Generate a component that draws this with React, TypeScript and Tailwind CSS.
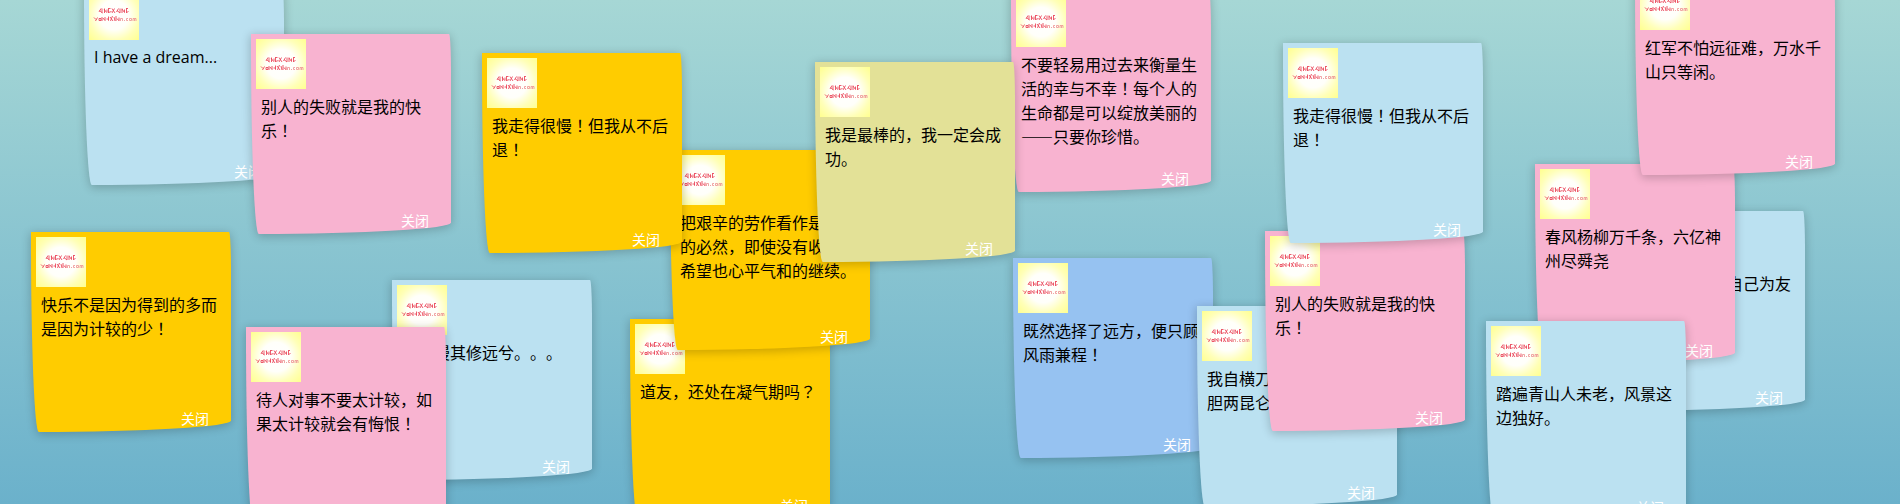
const blue = "bg-[#bbe1f1]";
const pink = "bg-[#f8b3d0]";
const yellow = "bg-[#ffcc00]";
const khaki = "bg-[#e3e197]";
const sky = "bg-[#96c2f1]";

type Note = { text: string; color: string; place: string };

// Later notes lie over earlier ones.
const notes: Note[] = [
  { text: "I have a dream...", color: blue, place: "left-[84px] top-[-15px]" },
  { text: "别人的失败就是我的快乐！", color: pink, place: "left-[251px] top-[34px]" },
  { text: "快乐不是因为得到的多而是因为计较的少！", color: yellow, place: "left-[31px] top-[232px]" },
  { text: "路漫漫其修远兮。。。", color: blue, place: "left-[392px] top-[280px]" },
  { text: "待人对事不要太计较，如果太计较就会有悔恨！", color: pink, place: "left-[246px] top-[327px]" },
  { text: "道友，还处在凝气期吗？", color: yellow, place: "left-[630px] top-[319px]" },
  { text: "把艰辛的劳作看作是生命的必然，即使没有收获的希望也心平气和的继续。", color: yellow, place: "left-[670px] top-[150px]" },
  { text: "我走得很慢！但我从不后退！", color: yellow, place: "left-[482px] top-[53px]" },
  { text: "不要轻易用过去来衡量生活的幸与不幸！每个人的生命都是可以绽放美丽的——只要你珍惜。", color: pink, place: "left-[1011px] top-[-8px]" },
  { text: "我是最棒的，我一定会成功。", color: khaki, place: "left-[815px] top-[62px]" },
  { text: "既然选择了远方，便只顾风雨兼程！", color: sky, place: "left-[1013px] top-[258px]" },
  { text: "我自横刀向天笑，去留肝胆两昆仑", color: blue, place: "left-[1197px] top-[306px]" },
  { text: "别人的失败就是我的快乐！", color: pink, place: "left-[1265px] top-[231px]" },
  { text: "我走得很慢！但我从不后退！", color: blue, place: "left-[1283px] top-[43px]" },
  { text: "以天地为师，以自己为友", color: blue, place: "left-[1605px] top-[211px]" },
  { text: "春风杨柳万千条，六亿神州尽舜尧", color: pink, place: "left-[1535px] top-[164px]" },
  { text: "红军不怕远征难，万水千山只等闲。", color: pink, place: "left-[1635px] top-[-25px]" },
  { text: "踏遍青山人未老，风景这边独好。", color: blue, place: "left-[1486px] top-[321px]" },
];

function Avatar() {
  return (
    <svg viewBox="0 0 50 50" className="block size-[50px]" aria-hidden="true">
      <defs>
        <radialGradient id="glow" cx="50%" cy="50%" r="70%">
          <stop offset="0" stopColor="#ffffff" />
          <stop offset="0.42" stopColor="#fffffa" />
          <stop offset="0.72" stopColor="#ffffb8" />
          <stop offset="1" stopColor="#ffff90" />
        </radialGradient>
      </defs>
      <rect width="50" height="50" fill="url(#glow)" />
      <g fill="none" stroke="#ea4a5c">
        <path
          strokeWidth="0.9"
          d="M10 22l2-3.500M10.500 20.500l3 2.500M13 18.500v4.500M15.500 18.500v4.500M15 19l2.500 3.500M18 19.500v3M19.500 18.500v4.500M19 18.500h2.500M19.500 22.500l3-1M23 18.500l3 4.500M25.500 18.500l-2.500 4.500M27.500 22l2-3.500M28 20.500l3 2.500M31 18.500v4.500M33 18.500v4.500M33 19l2.500 3.500M35.500 19.500v3M37.500 18.500v4.500M37 18.500h2M37.500 22.500l2-1"
        />
        <path
          strokeWidth="0.9"
          d="M5 27.500l2 2M8.500 27.500l-2 3.500M10 28.500h2v2h-2zM13 27v4M14 28l1.500 2M16 27v4M17.500 29h2v1.500M19.500 26.500v4M21 27l3 4M23.500 26l-2 5M25 27l1 4M27 26v5M28 28.500l1.500 2M30 27.500v3.500"
        />
      </g>
      <path
        fill="none"
        stroke="#ec8f90"
        strokeWidth="0.8"
        d="M31.500 31v-2.500h2V31M35 30.500h1M39 28.500h-1.500v2H39M40.500 28.500h2v2h-2zM44 31v-2.500h1.500V31M45.500 28.500H47V31"
      />
    </svg>
  );
}

// Exclamation and question marks are centred in their full-width cell.
function NoteText({ text }: { text: string }) {
  return text.split(/([！？])/).map((part, i) =>
    i % 2 === 1 ? (
      <span key={i} lang="zh-TW" className="font-['Noto_Sans_CJK_TC',sans-serif]">
        {part}
      </span>
    ) : (
      part
    ),
  );
}

function NoteCard({ text, color, place }: Note) {
  const latin = text.charCodeAt(0) < 128;
  return (
    <article
      className={`absolute flex size-[200px] flex-col rounded-tr-[5px_100px] rounded-br-[500px_30px] rounded-bl-[20px_500px] p-[5px] pb-[6px] shadow-[0_2px_10px_1px_rgba(0,0,0,0.2)] ${color} ${place}`}
    >
      <Avatar />
      <p
        className={`grow px-[5px] pt-[5px] text-base leading-6 text-black [text-spacing-trim:space-all] ${
          latin ? "font-['Open_Sans',sans-serif]" : ""
        }`}
      >
        <NoteText text={text} />
      </p>
      <button type="button" className="mr-[17px] cursor-pointer self-end text-sm leading-4 text-white">
        关闭
      </button>
    </article>
  );
}

export default function App() {
  return (
    <main
      lang="zh-CN"
      className="relative h-screen overflow-hidden bg-linear-to-b from-[#a6d7d5] to-[#6bb1cb] font-['Noto_Sans_CJK_SC',sans-serif]"
    >
      {notes.map((note, i) => (
        <NoteCard key={i} {...note} />
      ))}
    </main>
  );
}
